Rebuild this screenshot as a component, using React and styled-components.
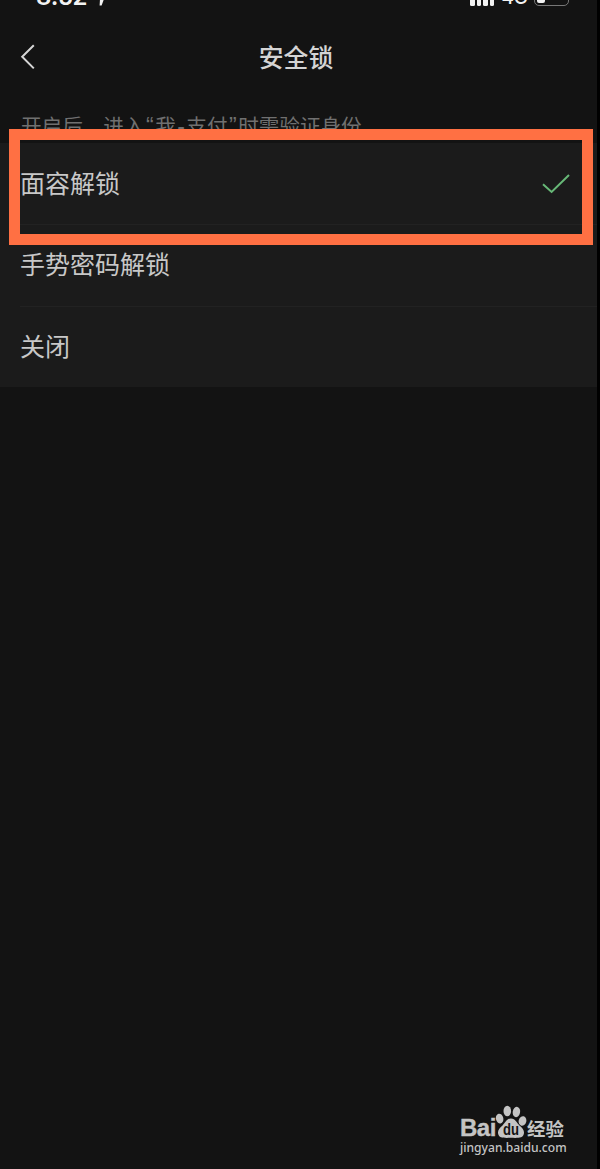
import React from "react";
import styled, { createGlobalStyle } from "styled-components";

const options = [
  { id: "face", label: "面容解锁" },
  { id: "gesture", label: "手势密码解锁" },
  { id: "off", label: "关闭" },
];

function StatusBar() {
  return (
    <Status>
      <Clock>8:52</Clock>
      <svg className="location" width="12" height="16" viewBox="0 0 12 16">
        <path d="M0 8 L12 1 L6.6 15.4 L4.6 15.4 L5 9 Z" fill="#f2f2f2" />
      </svg>
      <Signal>
        <i />
        <i />
        <i />
        <i />
      </Signal>
      <Network>4G</Network>
      <Battery>
        <span />
      </Battery>
    </Status>
  );
}

function Watermark() {
  return (
    <Mark>
      <div className="logo">
        <span className="bai">Bai</span>
        <svg width="32" height="36" viewBox="0 0 32 36">
          <g fill="#c4c4c4">
            <ellipse cx="4.6" cy="15.6" rx="3.7" ry="5" transform="rotate(-12 4.6 15.6)" />
            <ellipse cx="12.3" cy="8" rx="3.8" ry="5.2" />
            <ellipse cx="21.4" cy="9" rx="3.7" ry="5.2" transform="rotate(12 21.4 9)" />
            <ellipse cx="27.5" cy="18" rx="3.8" ry="4.8" transform="rotate(15 27.5 18)" />
            <path d="M16 15.5 C20.5 15.5 21.5 19.5 24.5 22.5 C28 25.5 29.6 28 28.8 31 C28 35.2 23 35 16 34.8 C9 35 4 35.2 3.2 31 C2.4 28 4 25.5 7.5 22.5 C10.5 19.5 11.5 15.5 16 15.5 Z" />
          </g>
          <text x="8" y="32" textLength="16" lengthAdjust="spacingAndGlyphs">
            du
          </text>
        </svg>
        <span className="name">经验</span>
      </div>
      <p>jingyan.baidu.com</p>
    </Mark>
  );
}

function App() {
  return (
    <>
      <GlobalStyle />
      <Screen>
        <StatusBar />
        <Header>
          <svg width="16" height="28" viewBox="0 0 16 28">
            <path d="M13.8 2.2 L2.2 13.8 L13.8 25.4" fill="none" stroke="#d6d6d6" strokeWidth="2" />
          </svg>
          <h1>安全锁</h1>
        </Header>
        <Hint>
          开启后，进入<q>“</q>我<q>-</q>支付<q>”</q>时需验证身份
        </Hint>
        <List>
          {options.map((option) => (
            <Row key={option.id}>
              <span>{option.label}</span>
              {option.id === "face" && (
                <svg width="28" height="20" viewBox="0 0 28 20">
                  <path d="M1 10.2 L9.6 18 L27 1" fill="none" stroke="#67b877" strokeWidth="2" />
                </svg>
              )}
            </Row>
          ))}
          <Highlight />
        </List>
        <Watermark />
      </Screen>
    </>
  );
}

const GlobalStyle = createGlobalStyle`
  body {
    margin: 0;
    background: #000;
  }
  * {
    box-sizing: border-box;
  }
`;

const Screen = styled.div`
  display: flex;
  flex-direction: column;
  width: 600px;
  height: 1169px;
  overflow: hidden;
  background: #131313;
  border-right: 3px solid #000;
  color: #c8c8c8;
  font-family: "Noto Sans CJK SC", sans-serif;
`;

/* only the bottom edge of the status bar is on screen */
const Status = styled.div`
  display: flex;
  align-items: flex-end;
  flex: none;
  width: 100%;
  height: 24px;
  margin-top: -18px;
  padding-left: 36px;
  color: #f2f2f2;
  .location {
    flex: none;
    margin-left: 8px;
  }
`;

const Clock = styled.div`
  width: 51px;
  height: 21px;
  font: 600 24px/24px Inter, sans-serif;
  letter-spacing: -0.5px;
  white-space: nowrap;
`;

const Signal = styled.div`
  display: flex;
  align-items: flex-end;
  gap: 2px;
  margin-left: 363px;
  i {
    width: 4.6px;
    height: 10px;
    border-radius: 1.5px;
    background: #f2f2f2;
  }
`;

const Network = styled.div`
  width: 27px;
  height: 18px;
  margin-left: 7px;
  font: 500 19px/20px Inter, sans-serif;
`;

const Battery = styled.div`
  width: 35px;
  height: 17px;
  margin-left: 6px;
  padding: 2px;
  border: 1.5px solid #777;
  border-radius: 5px;
  span {
    display: block;
    width: 8px;
    height: 100%;
    border-radius: 2px;
    background: #f2f2f2;
  }
`;

const Header = styled.header`
  display: grid;
  grid-template-columns: 60px 1fr 65px;
  align-items: center;
  flex: none;
  height: 102px;
  svg {
    margin-left: 20px;
  }
  h1 {
    margin: 0;
    padding-bottom: 3px;
    color: #d4d4d4;
    font-size: 24.8px;
    font-weight: 500;
    line-height: 36px;
    text-align: center;
  }
`;

const Hint = styled.p`
  flex: none;
  height: 35px;
  margin: 0;
  padding-left: 21px;
  color: #707070;
  font-size: 20.6px;
  line-height: 34px;
  white-space: nowrap;
  q {
    display: inline-block;
    width: 10.6px;
    quotes: none;
    text-align: center;
    font-family: "Liberation Sans", sans-serif;
    font-size: 23px;
    line-height: 20px;
    &::before,
    &::after {
      content: none;
    }
  }
`;

const List = styled.div`
  position: relative;
  flex: none;
  padding-left: 20px;
  background: #1b1b1b;
`;

const Row = styled.div`
  display: flex;
  align-items: center;
  justify-content: space-between;
  height: 81.3px;
  padding-right: 27px;
  font-size: 25px;
  line-height: 36px;
  span {
    padding-bottom: 4px;
  }
  &:not(:first-child) {
    border-top: 1px solid #222;
  }
`;

const Highlight = styled.div`
  position: absolute;
  top: -14px;
  left: 9px;
  width: 584px;
  height: 116px;
  border: 11px solid #ff7043;
`;

const Mark = styled.div`
  margin: auto 30px 13px auto;
  width: 107px;
  color: #c4c4c4;
  .logo {
    display: flex;
    align-items: flex-end;
    height: 36px;
  }
  .bai {
    width: 35px;
    height: 23px;
    font: 700 24px/24px "Liberation Sans", sans-serif;
    letter-spacing: -0.5px;
    -webkit-text-stroke: 0.4px #c4c4c4;
  }
  svg {
    flex: none;
  }
  svg text {
    fill: #131313;
    font: 700 16px "Liberation Sans", sans-serif;
  }
  .name {
    height: 21px;
    font-size: 18.4px;
    font-weight: 700;
    line-height: 20px;
    white-space: nowrap;
  }
  p {
    margin: 0;
    font: 500 12.1px/17px "Noto Sans", sans-serif;
    white-space: nowrap;
  }
`;

export default App;
